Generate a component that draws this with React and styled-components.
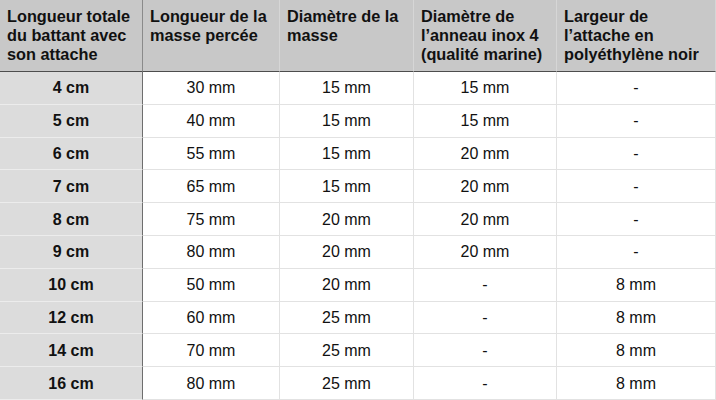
import React from "react";
import styled, { createGlobalStyle } from "styled-components";

const Global = createGlobalStyle`
  html, body { margin: 0; padding: 0; background: #ffffff; }
  body { font-family: "Liberation Sans", Arial, Helvetica, sans-serif; color: #111; }
`;

const Grid = styled.div`
  display: grid;
  grid-template-columns: 143px 137px 134px 143px 159px;
  grid-template-rows: 72px repeat(10, 32.8px);
  width: 716px;
  height: 400px;
  overflow: hidden;
  font-size: 16px;
`;

const Head = styled.div`
  box-sizing: border-box;
  background: #c8c8c8;
  border-bottom: 1px solid #4d4d4d;
  border-right: 1px solid ${(p) => (p.$first ? "#8a8a8a" : "#d6d6d6")};
  padding: 7px 4px 0 7px;
  font-weight: bold;
  font-size: 16.3px;
  line-height: 19px;
  color: #111;
  white-space: nowrap;
`;

const Cell = styled.div`
  box-sizing: border-box;
  display: flex;
  align-items: center;
  justify-content: center;
  background: ${(p) => (p.$first ? "#dcdcdc" : "#ffffff")};
  border-bottom: 1px solid ${(p) => (p.$first ? "#ececec" : "#e2e2e2")};
  border-right: 1px solid ${(p) => (p.$first ? "#6e6e6e" : "#e2e2e2")};
  font-weight: ${(p) => (p.$first ? "bold" : "normal")};
  color: #111;
  padding-top: 1px;
`;

const headers = [
  ["Longueur totale", "du battant avec", "son attache"],
  ["Longueur de la", "masse percée"],
  ["Diamètre de la", "masse"],
  ["Diamètre de", "l’anneau inox 4", "(qualité marine)"],
  ["Largeur de", "l’attache en", "polyéthylène noir"],
];

const rows = [
  ["4 cm", "30 mm", "15 mm", "15 mm", "-"],
  ["5 cm", "40 mm", "15 mm", "15 mm", "-"],
  ["6 cm", "55 mm", "15 mm", "20 mm", "-"],
  ["7 cm", "65 mm", "15 mm", "20 mm", "-"],
  ["8 cm", "75 mm", "20 mm", "20 mm", "-"],
  ["9 cm", "80 mm", "20 mm", "20 mm", "-"],
  ["10 cm", "50 mm", "20 mm", "-", "8 mm"],
  ["12 cm", "60 mm", "25 mm", "-", "8 mm"],
  ["14 cm", "70 mm", "25 mm", "-", "8 mm"],
  ["16 cm", "80 mm", "25 mm", "-", "8 mm"],
];

export default function App() {
  return (
    <>
      <Global />
      <Grid>
        {headers.map((lines, i) => (
          <Head key={i} $first={i === 0}>
            {lines.map((l, j) => (
              <div key={j}>{l}</div>
            ))}
          </Head>
        ))}
        {rows.map((r, ri) =>
          r.map((v, ci) => (
            <Cell key={ri + "-" + ci} $first={ci === 0}>
              {v}
            </Cell>
          ))
        )}
      </Grid>
    </>
  );
}
